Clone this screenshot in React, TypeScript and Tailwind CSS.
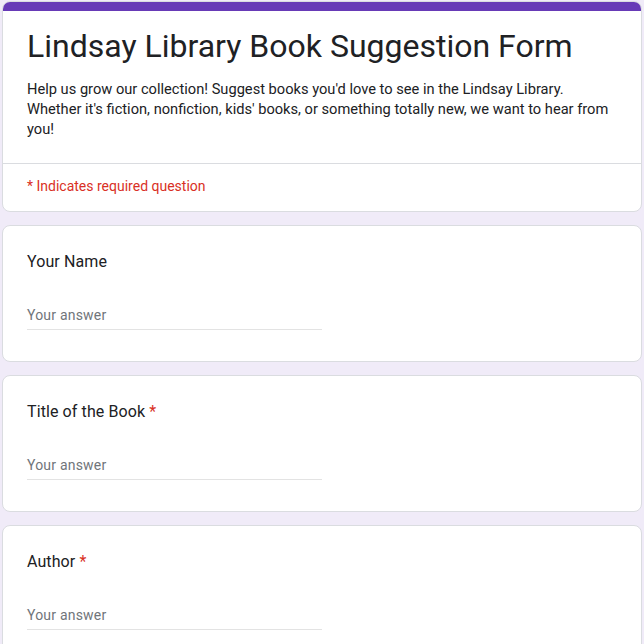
import React from 'react';

interface QuestionProps {
  title: string;
  required?: boolean;
}

function Question({ title, required }: QuestionProps) {
  return (
    <div className="bg-white border border-[#dadce0] rounded-lg px-6 pt-6 pb-[31px]">
      <div className="text-[16px] leading-6 text-[#202124] tracking-[0.1px]">
        {title}
        {required && <span className="text-[#d93025] ml-1">*</span>}
      </div>
      <div className="mt-[27px] w-[295px] h-[29px] border-b border-[#e3e3e3] flex items-center">
        <span className="text-[14px] text-[#70757a] tracking-[0.2px]">Your answer</span>
      </div>
    </div>
  );
}

export default function App() {
  return (
    <div
      className="min-h-screen bg-[#f0ebf8] px-[2px] pt-[1px] pb-6"
      style={{ fontFamily: 'Roboto, "Liberation Sans", sans-serif' }}
    >
      <div className="flex flex-col gap-[13px]">
        <div className="bg-white border border-[#dadce0] rounded-lg overflow-hidden">
          <div className="h-[10px] bg-[#673ab7] -mx-px -mt-px"></div>
          <div className="px-6 pt-[15px] pb-6 border-b border-[#dadce0]">
            <h1 className="text-[32px] leading-10 text-[#202124]">Lindsay Library Book Suggestion Form</h1>
            <p className="mt-[13px] text-[14.65px] leading-5 text-[#202124]">
              Help us grow our collection! Suggest books you'd love to see in the Lindsay Library. Whether it's fiction, nonfiction, kids' books, or something totally new, we want to hear from you!
            </p>
          </div>
          <div className="px-6 pt-3 pb-[15px] text-[14px] leading-5 text-[#d93025]">* Indicates required question</div>
        </div>
        <Question title="Your Name" />
        <Question title="Title of the Book" required />
        <Question title="Author" required />
      </div>
    </div>
  );
}
